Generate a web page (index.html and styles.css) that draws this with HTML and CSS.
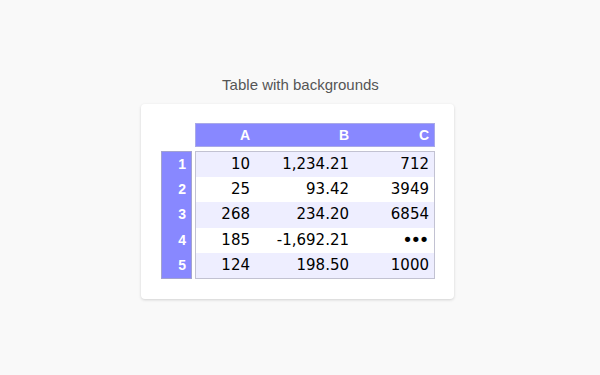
FILE: index.html
```html
<!DOCTYPE html>
<html>
<head>
<meta charset="utf-8">
<link rel="stylesheet" href="styles.css">
</head>
<body>
<div class="page">
  <div class="title">Table with backgrounds</div>
  <div class="card">
    <div class="sheet">
      <div class="corner"></div>
      <div class="colhead">
        <div class="hc">A</div>
        <div class="hc">B</div>
        <div class="hc">C</div>
      </div>
      <div class="rowhead">
        <div class="rh">1</div>
        <div class="rh">2</div>
        <div class="rh">3</div>
        <div class="rh">4</div>
        <div class="rh">5</div>
      </div>
      <div class="body">
        <div class="row alt"><div class="c">10</div><div class="c">1,234.21</div><div class="c">712</div></div>
        <div class="row"><div class="c">25</div><div class="c">93.42</div><div class="c">3949</div></div>
        <div class="row alt"><div class="c">268</div><div class="c">234.20</div><div class="c">6854</div></div>
        <div class="row"><div class="c">185</div><div class="c">-1,692.21</div><div class="c dots">•••</div></div>
        <div class="row alt"><div class="c">124</div><div class="c">198.50</div><div class="c">1000</div></div>
      </div>
    </div>
  </div>
</div>
</body>
</html>
```
FILE: styles.css
```css
html, body {
  margin: 0;
  padding: 0;
  background: #f9f9f9;
}
.page {
  width: 600px;
  height: 375px;
  display: flex;
  flex-direction: column;
  align-items: center;
  justify-content: center;
  font-family: "Liberation Sans", Arial, sans-serif;
}
.title {
  font-size: 15px;
  line-height: 18px;
  color: #555;
  margin-bottom: 10px;
  margin-left: 1px;
}
.card {
  background: #fff;
  border-radius: 4px;
  box-shadow: 0 1px 3px rgba(0, 0, 0, 0.16);
  padding: 19px 19px 20px 20px;
  margin-right: 5px;
}
.sheet {
  display: grid;
  grid-template-columns: 31px 240px;
  grid-template-rows: 24px auto;
  column-gap: 3px;
  row-gap: 4px;
}
.colhead {
  display: grid;
  grid-template-columns: 59px 99px 80px;
  background: #8888ff;
  border: 1px solid #a9a9e8;
}
.hc {
  color: #fff;
  font-weight: bold;
  font-size: 14px;
  line-height: 22px;
  text-align: right;
  padding-right: 5px;
}
.rowhead {
  background: #8888ff;
  border: 1px solid #a3a3cf;
  display: grid;
  grid-auto-rows: 25.2px;
}
.rh {
  color: #fff;
  font-weight: bold;
  font-size: 14px;
  line-height: 24px;
  text-align: right;
  padding-right: 5px;
}
.body {
  border: 1px solid #c2c2d2;
  display: grid;
  grid-auto-rows: 25.2px;
}
.row {
  display: grid;
  grid-template-columns: 59px 99px 80px;
  background: #fff;
}
.row.alt {
  background: #eeeeff;
}
.c {
  font-family: "DejaVu Sans", Verdana, sans-serif;
  font-size: 15px;
  line-height: 24px;
  color: #000;
  text-align: right;
  padding-right: 5px;
}
.c.dots {
  font-size: 18px;
  letter-spacing: -2.4px;
  padding-right: 7px;
}
```
